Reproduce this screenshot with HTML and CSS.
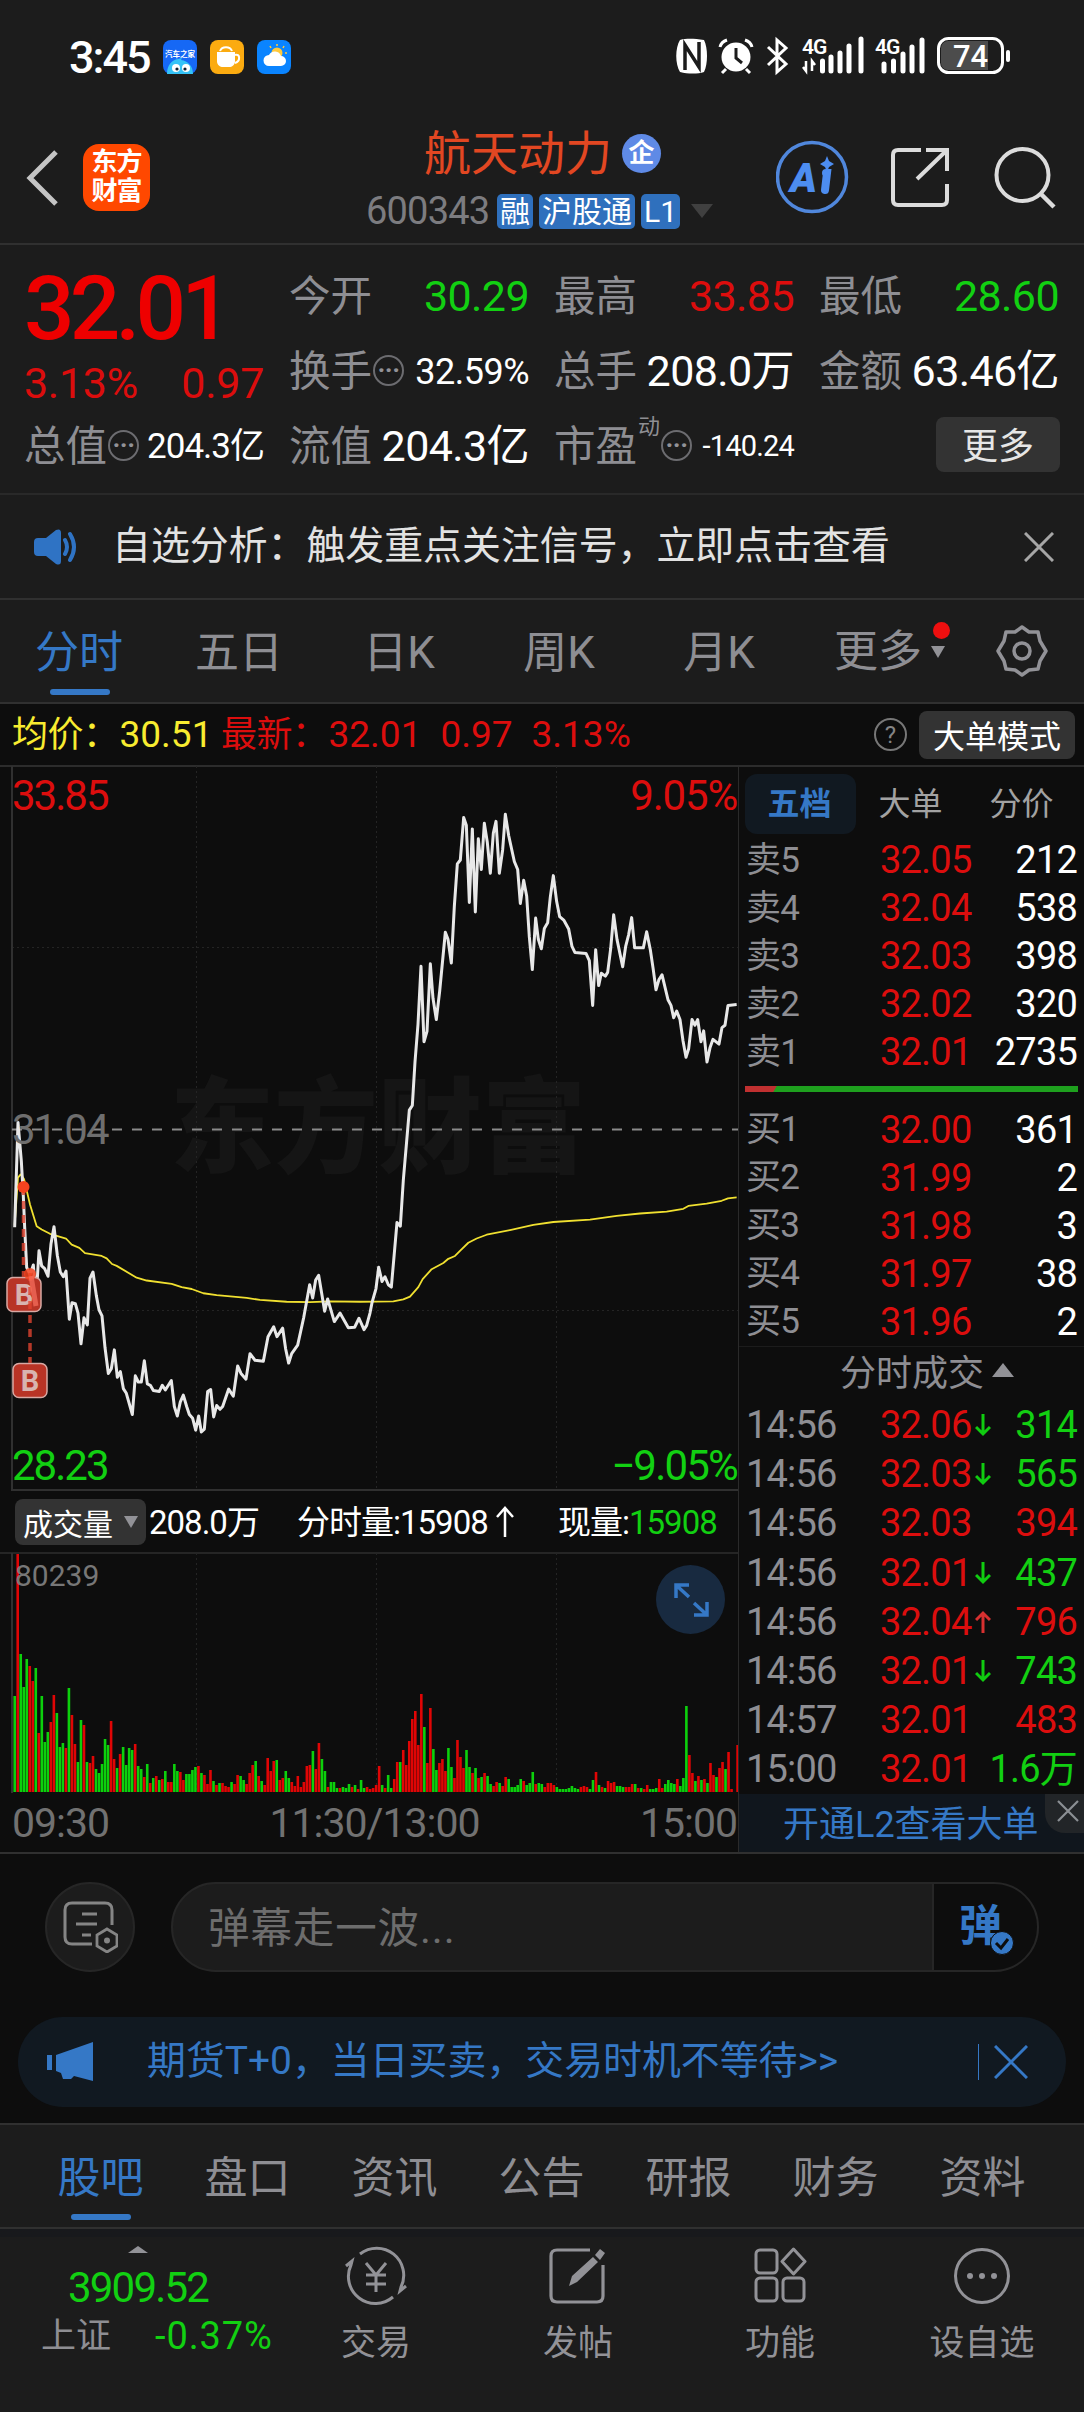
FILE: index.html
```html
<!DOCTYPE html>
<html lang="zh-CN">
<head>
	<meta charset="UTF-8">
	<meta name="viewport" content="width=device-width">
	<title>航天动力 600343</title>
	<link rel="stylesheet" href="styles.css">
</head>

<body>
	<div class="statusbar">
		<span class="clock">3:45</span>
		<svg class="apps" width="128" height="34" viewBox="0 0 128 34">
			<rect width="34" height="34" rx="8" fill="#1668f5"/>
			<text x="17" y="17" text-anchor="middle" font-size="7.5" font-weight="700" fill="#fff">汽车之家</text>
			<path d="M4 34c0-9 5-14 11-15l4-1-1 2c7 1 12 6 12 14z" fill="#35c3f7"/>
			<circle cx="13" cy="28" r="4" fill="#fff"/><circle cx="23" cy="28" r="4" fill="#fff"/>
			<circle cx="14" cy="29" r="1.6" fill="#123"/><circle cx="22" cy="29" r="1.6" fill="#123"/>
			<rect x="47" width="34" height="34" rx="8" fill="#fbab10"/>
			<path d="M54 12h18v9c0 4-3 6-6 6h-6c-3 0-6-2-6-6z" fill="#fff"/>
			<path d="M72 15c5-2 6 6 0 8M57 11c2-5 10-5 12 0" fill="none" stroke="#fff" stroke-width="2"/>
			<rect x="94" width="34" height="34" rx="8" fill="#0a84ff"/>
			<circle cx="114" cy="13" r="5.5" fill="#ffc93c"/>
			<path d="M114 4v2M121 6l-1 2M124 13h-2M107 6l1 2" stroke="#ffc93c" stroke-width="1.5"/>
			<path d="M106 26a5.500 5.500 0 0 1 0-11 6.500 6.500 0 0 1 12 1 5 5 0 0 1 0 10z" fill="#fff"/>
		</svg>
		<svg class="sysicons" width="336" height="40" viewBox="0 0 336 40">
			<path d="M4 4c8-2 15-1 24 0 4 8 4 24 0 32-6 2-16 2-24 0-5-8-5-24 0-32z" fill="#fff"/>
			<path d="M9 34V9l14 22V6" fill="none" stroke="#1c1c1c" stroke-width="3.500"/>
			<circle cx="60" cy="21" r="14.500" fill="#fff"/>
			<path d="M60 12v10l6 5" fill="none" stroke="#1c1c1c" stroke-width="3"/>
			<path d="M44 11c1-4 4-6 7-7M76 11c-1-4-4-6-7-7M50 33l-4 4M70 33l4 4" fill="none" stroke="#fff" stroke-width="3"/>
			<path d="M92 11l18 17-9 8V4l9 8-18 17" fill="none" stroke="#fff" stroke-width="3"/>
			<text class="net" x="126" y="18">4G</text>
			<path d="M130 25v10l-3-4M136 35V25l3 4" fill="none" stroke="#fff" stroke-width="2.500"/>
			<path d="M145.500 36V26M154 36V22M163 36V18M172 36V11M184 36V4" stroke="#fff" stroke-width="5" stroke-linecap="round" transform="translate(1 -1)"/>
			<text class="net" x="199" y="18">4G</text>
			<path d="M208 35V28M217.500 35V25M227 35V18M236 35V11M246 35V4" stroke="#fff" stroke-width="5" stroke-linecap="round"/>
			<rect x="262.500" y="2.500" width="64" height="34" rx="10" fill="#1c1c1c" stroke="#fff" stroke-width="3"/>
			<path d="M272 5h40v29h-40a7 7 0 0 1-7-7V12a7 7 0 0 1 7-7z" fill="#4c4c4c"/>
			<text x="294.500" y="30.500" text-anchor="middle" font-size="31" font-weight="500" fill="#fff">74</text>
			<path d="M332 16v8" stroke="#fff" stroke-width="4" stroke-linecap="round"/>
		</svg>
	</div>

	<header class="header">
		<svg class="back" width="34" height="56" viewBox="0 0 34 56"><path d="M30 2L4 28l26 26" fill="none" stroke="#c4c4c4" stroke-width="5"/></svg>
		<div class="logo">东方<br>财富</div>
		<div class="title">
			<div class="name">航天动力<span class="qi">企</span></div>
			<div class="code"><span class="num">600343</span><i class="tag">融</i><i class="tag">沪股通</i><i class="tag">L1</i><b class="down"></b></div>
		</div>
		<svg class="headicons" width="288" height="76" viewBox="0 0 288 76">
			<circle cx="36" cy="38" r="34.500" fill="none" stroke="#5087dc" stroke-width="3.500"/>
			<text x="14" y="53" font-size="41" font-weight="900" font-style="italic" fill="#4d8df0">A</text>
			<path d="M50 34h1l-2 17M50 34" fill="none" stroke="#4d8df0" stroke-width="8" stroke-linecap="round"/>
			<path d="M51 17l2 5 5 3-5 3-2 5-2-5-5-3 5-3z" fill="#4d8df0"/>
			<path d="M145 11h-23q-5 0-5 5v45q0 5 5 5h44q5 0 5-5V45M150 11h21v21M170 12l-29 28" fill="none" stroke="#dcdcdc" stroke-width="4"/>
			<circle cx="246.500" cy="36" r="26" fill="none" stroke="#dcdcdc" stroke-width="4"/>
			<path d="M264 54l14 14" stroke="#dcdcdc" stroke-width="4.500"/>
		</svg>
	</header>

	<section class="quote">
		<div class="last">
			<div class="price">32.01</div>
			<div class="change num"><span>3.13%</span><span>0.97</span></div>
		</div>
		<div class="cell"><label>今开</label><span class="num green">30.29</span></div>
		<div class="cell"><label>最高</label><span class="num red">33.85</span></div>
		<div class="cell"><label>最低</label><span class="num green">28.60</span></div>
		<div class="cell"><label>换手</label><b class="tip">···</b><span class="num mid">32.59%</span></div>
		<div class="cell"><label>总手</label><span class="num">208.0万</span></div>
		<div class="cell"><label>金额</label><span class="num">63.46亿</span></div>
		<div class="cell"><label>总值</label><b class="tip">···</b><span class="num mid total-value">204.3亿</span></div>
		<div class="cell"><label>流值</label><span class="num">204.3亿</span></div>
		<div class="cell"><label>市盈</label><sup>动</sup><b class="tip">···</b><span class="num small">-140.24</span></div>
		<div class="cell"><button class="more">更多</button></div>
	</section>

	<section class="notice">
		<svg width="46" height="36" viewBox="0 0 46 36"><path d="M0 13q0-4 4-4h8L22 1q5-2 5 3v28q0 5-5 3L12 27H4q-4 0-4-4z" fill="#2f73c4"/><path d="M31 11q4 7 0 14M36 5q8 13 0 26" fill="none" stroke="#2f73c4" stroke-width="4" stroke-linecap="round"/></svg>
		<p>自选分析：触发重点关注信号，立即点击查看</p>
		<svg width="30" height="30" viewBox="0 0 30 30"><path d="M1 1l28 28M29 1L1 29" stroke="#a6a6a6" stroke-width="3"/></svg>
	</section>

	<nav class="ktabs">
		<a class="active">分时</a><a>五日</a><a>日K</a><a>周K</a><a>月K</a>
		<a class="moretab">更多<b class="down"></b><i class="dot"></i></a>
		<svg width="52" height="52" viewBox="0 0 52 52"><path d="M26 2l7 5 9 0 2 9 6 10-6 10-2 8-9 1-7 5-7-5-9-1-2-8-6-10 6-10 2-9 9 0z" fill="none" stroke="#929297" stroke-width="3.500" stroke-linejoin="round"/><circle cx="26" cy="26" r="8" fill="none" stroke="#929297" stroke-width="3.500"/></svg>
	</nav>

	<section class="avgbar">
		<span class="yellow">均价：<span class="v1">30.51</span></span>
		<span class="red new">最新：<span class="v2">32.01</span><span class="v3">0.97</span><span class="v4">3.13%</span></span>
		<b class="help">?</b>
		<button class="bigmode">大单模式</button>
	</section>

	<main class="board">
		<div class="charts">
			<div class="minute">
				<span class="watermark">东方财富</span>
				<svg class="plot" width="738" height="725" viewBox="0 0 738 725">
					<path d="M196.500 0v724M376.500 0v724M556.500 0v724M12 181.500h726M12 544.500h726" stroke="#242424" stroke-width="1" stroke-dasharray="2 3"/>
					<path d="M12 0v725M12 724h726" fill="none" stroke="#303030" stroke-width="2"/>
					<path d="M12 363.500h726" stroke="#8a8a8a" stroke-width="1.800" stroke-dasharray="10 10"/>
					<g fill="none" stroke-linejoin="round" transform="scale(.33333 .4719) translate(0 -12.700)">
						<polyline vector-effect="non-scaling-stroke" stroke="#f0e030" stroke-width="1.800" points="44,985 54,885 62,878 72,888 90,942 110,988 125,995 150,1004 198,1014 215,1027 238,1034 255,1045 305,1051 320,1056 336,1068 350,1072 410,1097 440,1103 515,1110 545,1117 575,1121 610,1130 650,1134 740,1140 780,1144 860,1148 930,1149 990,1147 1080,1148 1180,1147 1210,1143 1230,1137 1255,1117 1268,1100 1295,1079 1330,1066 1345,1057 1365,1051 1380,1040 1405,1023 1430,1014 1460,1006 1530,996 1600,985 1660,979 1770,974 1850,966 1920,961 2000,957 2050,951 2065,945 2120,940 2165,934 2184,929 2210,927"/>
						<polyline vector-effect="non-scaling-stroke" stroke="#e8e8e8" stroke-width="3" points="44,990 54,768 64,850 70,925 74,990 80,1075 90,1090 100,1070 108,1145 117,1040 125,1072 134,1078 144,1094 153,1025 162,989 172,1050 181,1085 190,1095 198,1083 208,1185 216,1150 226,1152 234,1172 243,1237 252,1182 262,1197 270,1098 279,1085 289,1135 297,1165 306,1178 315,1245 325,1300 334,1290 343,1250 352,1308 361,1296 370,1332 379,1342 397,1387 406,1305 415,1318 424,1318 433,1273 442,1322 451,1325 460,1336 478,1338 487,1325 496,1335 514,1315 523,1370 532,1390 541,1360 550,1346 560,1370 568,1387 578,1395 587,1420 596,1390 604,1424 613,1418 623,1338 632,1334 641,1392 650,1368 660,1376 668,1370 686,1333 700,1348 713,1284 723,1300 738,1312 750,1258 765,1272 790,1274 804,1222 821,1201 831,1222 848,1204 857,1248 866,1278 875,1258 893,1240 911,1182 929,1112 938,1140 947,1102 956,1092 974,1168 983,1142 1003,1190 1020,1172 1045,1203 1064,1202 1077,1183 1092,1207 1100,1198 1110,1172 1116,1150 1128,1120 1136,1075 1146,1105 1155,1095 1165,1112 1174,1117 1183,1045 1191,980 1201,988 1210,890 1228,742 1237,732 1245,640 1254,560 1263,437 1272,597 1281,575 1291,432 1299,505 1309,550 1319,490 1336,365 1344,380 1354,430 1363,310 1372,220 1381,212 1391,122 1399,138 1408,302 1417,146 1426,322 1435,167 1444,232 1453,134 1462,175 1471,240 1480,155 1488,130 1498,240 1508,190 1516,115 1526,160 1543,215 1553,232 1561,304 1571,255 1580,288 1588,375 1597,444 1607,335 1615,380 1624,400 1633,357 1643,345 1651,290 1660,245 1670,300 1679,332 1692,340 1706,358 1716,395 1725,408 1758,410 1768,425 1778,520 1787,402 1796,478 1804,452 1816,458 1823,450 1832,400 1841,328 1851,380 1868,438 1877,395 1886,370 1895,334 1904,398 1930,398 1940,364 1951,402 1959,440 1968,487 1977,465 1986,455 2004,508 2013,520 2021,546 2030,532 2040,550 2049,595 2058,630 2066,612 2076,550 2085,562 2093,550 2103,597 2111,574 2121,640 2130,610 2139,592 2157,602 2166,567 2175,562 2184,520 2210,518"/>
					</g>
					<g font-size="29" font-weight="700" text-anchor="middle">
						<rect x="7" y="511.500" width="34" height="34" rx="6" fill="#b83426" stroke="#d8a9a4" stroke-width="1.500"/>
						<text x="24" y="539" fill="#d8b4b0">B</text>
						<rect x="13" y="597.500" width="34" height="34" rx="6" fill="#b83426" stroke="#d8a9a4" stroke-width="1.500"/>
						<text x="30" y="625" fill="#d8b4b0">B</text>
					</g>
					<path d="M23.500 421v90M30 507v90" stroke="#e0432f" stroke-opacity=".8" stroke-width="3.500" stroke-dasharray="8 6"/>
					<circle cx="23.500" cy="421" r="6" fill="#f4431f"/><circle cx="30" cy="508" r="6" fill="#f4431f" fill-opacity=".85"/>
					<path d="M31 510l5 30" stroke="#f87060" stroke-opacity=".7" stroke-width="5"/>
				</svg>
				<span class="axis tl red">33.85</span>
				<span class="axis tr red">9.05%</span>
				<span class="axis ml">31.04</span>
				<span class="axis bl green">28.23</span>
				<span class="axis br green">−9.05%</span>
			</div>
			<div class="volhead">
				<button>成交量<b class="down"></b></button>
				<span class="total">208.0万</span>
				<span class="minvol">分时量:15908<svg width="18" height="32" viewBox="0 0 18 32"><path d="M9 31V2M1 11l8-9 8 9" fill="none" stroke="#fff" stroke-width="2.500"/></svg></span>
				<span class="now">现量:<em class="green">15908</em></span>
			</div>
			<div class="volume">
				<svg id="bars" class="plot" width="738" height="240" viewBox="0 0 738 240">
					<path d="M196.500 0v239M376.500 0v239M556.500 0v239" stroke="#242424" stroke-width="1" stroke-dasharray="2 3"/>
					<path d="M12 0v240" stroke="#303030" stroke-width="2"/>
				</svg>
				<span class="volmax">80239</span>
				<svg class="expand" width="69" height="69" viewBox="0 0 69 69"><circle cx="34.500" cy="34.500" r="34.500" fill="#182a40"/><path d="M20 33V20h13M20 20l13 12M51 37v13H38M51 50L38 38" fill="none" stroke="#3578c6" stroke-width="3.500"/></svg>
			</div>
			<div class="times"><span>09:30</span><span>11:30/13:00</span><span>15:00</span></div>
		</div>

		<aside class="depth">
			<div class="dtabs"><a class="active">五档</a><a>大单</a><a>分价</a></div>
			<div class="rows">
				<div class="row"><label>卖5</label><span class="red">32.05</span><span>212</span></div>
				<div class="row"><label>卖4</label><span class="red">32.04</span><span>538</span></div>
				<div class="row"><label>卖3</label><span class="red">32.03</span><span>398</span></div>
				<div class="row"><label>卖2</label><span class="red">32.02</span><span>320</span></div>
				<div class="row"><label>卖1</label><span class="red">32.01</span><span>2735</span></div>
			</div>
			<div class="ratio"></div>
			<div class="rows">
				<div class="row"><label>买1</label><span class="red">32.00</span><span>361</span></div>
				<div class="row"><label>买2</label><span class="red">31.99</span><span>2</span></div>
				<div class="row"><label>买3</label><span class="red">31.98</span><span>3</span></div>
				<div class="row"><label>买4</label><span class="red">31.97</span><span>38</span></div>
				<div class="row"><label>买5</label><span class="red">31.96</span><span>2</span></div>
			</div>
			<div class="dealhead">分时成交<b class="up"></b></div>
			<div class="rows deals" id="deals"></div>
			<div class="l2">开通L2查看大单<span class="l2close"><svg width="22" height="22" viewBox="0 0 22 22"><path d="M1 1l20 20M21 1L1 21" stroke="#8b8f94" stroke-width="2.200"/></svg></span></div>
		</aside>
	</main>

	<section class="danmu">
		<div class="set"><svg width="56" height="52" viewBox="0 0 56 52"><path d="M30 43H10q-7 0-7-7V9q0-7 7-7h33q7 0 7 7v15M20 13h15M14 23h21M20 34h9" fill="none" stroke="#858585" stroke-width="3"/><path d="M45 28l10 6v11l-10 6-10-6V34z" fill="none" stroke="#858585" stroke-width="2.800"/><circle cx="45" cy="39.500" r="3" fill="#858585"/></svg></div>
		<div class="field"><span>弹幕走一波...</span><div class="send">弹<svg width="24" height="24" viewBox="0 0 24 24"><circle cx="12" cy="12" r="11.500" fill="#3578c6" stroke="#0d0d0d"/><path d="M6 12l5 5 7-9" fill="none" stroke="#0d0d0d" stroke-width="3"/></svg></div></div>
	</section>

	<section class="promo-wrap">
		<div class="promo">
			<svg width="46" height="40" viewBox="0 0 46 40"><path d="M0 13h5v15H0zM9 13L46 0v39L27 34l-3 3h-8l-2-6-5-2z" fill="#3578c6"/></svg>
			<p>期货T+0，当日买卖，交易时机不等待&gt;&gt;</p>
			<i></i>
			<svg width="34" height="34" viewBox="0 0 34 34"><path d="M1 1l32 32M33 1L1 33" stroke="#3578c6" stroke-width="3"/></svg>
		</div>
	</section>

	<nav class="infotabs">
		<a class="active">股吧</a><a>盘口</a><a>资讯</a><a>公告</a><a>研报</a><a>财务</a><a>资料</a>
	</nav>

	<footer class="toolbar">
		<div class="index">
			<b class="up"></b>
			<div class="point">3909.52</div>
			<div class="pct"><span>上证</span><em>-0.37%</em></div>
		</div>
		<div class="tool">
			<svg width="66" height="60" viewBox="0 0 66 60"><path d="M17 8A27 27 0 0 1 58 41l-1 4 6-5M50 51A27 27 0 0 1 8 19l1-4-6 5" fill="none" stroke="#929297" stroke-width="3"/><path d="M23 17l10 12 10-12M33 29v17M23 29h20M23 38h20" fill="none" stroke="#929297" stroke-width="3"/></svg>
			<span>交易</span>
		</div>
		<div class="tool">
			<svg width="58" height="60" viewBox="0 0 58 60"><path d="M41 4H8q-6 0-6 6v40q0 6 6 6h40q6 0 6-6V19" fill="none" stroke="#929297" stroke-width="3.200"/><path d="M20 40l3-10L44 11l5 5-21 20zM46 9l5-6 5 4-5 7z" fill="#929297"/></svg>
			<span>发帖</span>
		</div>
		<div class="tool">
			<svg width="54" height="60" viewBox="0 0 54 60"><g fill="none" stroke="#929297" stroke-width="3"><rect x="3" y="4" width="21" height="23" rx="4"/><rect x="3" y="32" width="21" height="23" rx="4"/><rect x="30" y="32" width="21" height="23" rx="4"/><path d="M40.500 3L52 15.500 40.500 28 29 15.500z" stroke-linejoin="round"/></g></svg>
			<span>功能</span>
		</div>
		<div class="tool">
			<svg width="58" height="60" viewBox="0 0 58 60"><circle cx="29" cy="30" r="26.500" fill="none" stroke="#929297" stroke-width="3"/><circle cx="17" cy="30" r="3" fill="#929297"/><circle cx="29" cy="30" r="3" fill="#929297"/><circle cx="41" cy="30" r="3" fill="#929297"/></svg>
			<span>设自选</span>
		</div>
	</footer>

	<script>
		// minute volume, one bar per minute: colour letter + bar height
		var volume = "G96 R238 G138 G105 G133 R126 R111 G124 R59 G96 G50 G60 R70 R97 G79 G45 G49 R44 G104 R77 R48 G30 G72 R67 G30 R29 R36 G23 G19 G28 G53 G47 R71 R33 G24 R38 G45 G27 G44 G42 R48 G26 G23 R15 G28 R9 G14 R16 G12 R13 G21 R10 R10 G28 G21 R20 R12 G18 G18 G22 G25 R26 G19 R17 R8 R22 G11 R7 G9 R9 R6 R5 G10 R8 R17 G16 G12 R8 R19 R27 G31 R16 G11 R7 R34 R21 R31 G32 R12 R14 G21 G14 R10 R6 R16 R5 R10 R26 R27 G41 R23 R49 G33 G21 R5 G10 G10 G4 R4 G5 G4 G8 R5 G7 R3 G12 G4 R5 R3 "
			+ "R4 R7 R26 G7 R4 G17 G4 R13 R30 G30 R42 R27 R51 R73 R81 R47 R98 G65 R29 R84 G43 G22 R29 R33 R21 G44 G25 R14 R52 R35 R24 G42 G25 R19 G24 R14 G15 R19 G16 G8 R6 R10 G9 R6 R15 G13 G5 G5 G7 G13 R11 G7 G9 G20 R8 G9 G8 R5 R9 R9 R7 G5 G3 G3 G3 G4 G6 G4 G3 R5 R6 R5 G3 G12 R20 G7 R5 G4 R11 R9 R10 G6 G6 G5 R5 R5 R8 G8 R4 G4 R3 R7 G3 G3 G4 R13 R4 G8 G12 G9 G8 R13 G6 G14 G86 R37 R19 G11 R16 G12 R13 G9 R29 R17 G15 R24 R30 G23 R40 R3 R0 R47";
		var svg = document.getElementById("bars");
		volume.split(" ").forEach(function (v, i) {
			var h = parseInt(v.slice(1));
			var bar = document.createElementNS("http://www.w3.org/2000/svg", "rect");
			bar.setAttribute("x", 13.4 + i * 3.012);
			bar.setAttribute("y", 239 - h);
			bar.setAttribute("width", 2.6);
			bar.setAttribute("height", h);
			bar.setAttribute("fill", v[0] == "R" ? "#e00505" : "#0cd00c");
			svg.appendChild(bar);
		});

		// time, price, arrow, volume, colour
		var deals = [
			["14:56", "32.06", "down", "314", "green"],
			["14:56", "32.03", "down", "565", "green"],
			["14:56", "32.03", "", "394", "red"],
			["14:56", "32.01", "down", "437", "green"],
			["14:56", "32.04", "up", "796", "red"],
			["14:56", "32.01", "down", "743", "green"],
			["14:57", "32.01", "", "483", "red"],
			["15:00", "32.01", "", "1.6万", "green"]
		];
		var arrows = {
			"": "",
			down: '<svg width="16" height="24" viewBox="0 0 16 24"><path d="M8 1v20M1 14l7 7 7-7" fill="none" stroke="#10cc10" stroke-width="3"/></svg>',
			up: '<svg width="16" height="24" viewBox="0 0 16 24"><path d="M8 23V3M1 10l7-7 7 7" fill="none" stroke="#d83030" stroke-width="3"/></svg>'
		};
		document.getElementById("deals").innerHTML = deals.map(function (d) {
			return '<div class="row"><label>' + d[0] + '</label><span class="red">' + d[1] + arrows[d[2]] + '</span><span class="' + d[4] + '">' + d[3] + '</span></div>';
		}).join("");
	</script>
</body>
</html>
```
FILE: styles.css
```css
* {
	box-sizing: border-box;
}

body {
	margin: 0;
	width: 1084px;
	height: 2412px;
	overflow: hidden;
	background-color: #1c1c1c;
	color: #fff;
	font-family: Roboto, "Noto Sans CJK SC", sans-serif;
	line-height: 1;
}

svg {
	display: block;
	flex: none;
}

p {
	margin: 0;
}

i, em {
	font-style: normal;
}

button {
	border: none;
	padding: 0;
	font-family: inherit;
	color: #fff;
	background-color: #333;
	border-radius: 8px;
}

.red {
	color: #dc0d0d;
}

.green {
	color: #12d012;
}

.yellow {
	color: #f8ec30;
}

.down, .up {
	width: 0;
	height: 0;
	border: 7px solid transparent;
	flex: none;
}

.down {
	border-top: 12px solid #929297;
	border-bottom: none;
}

.up {
	border-bottom: 14px solid #929297;
	border-top: none;
}

/* status bar */
.statusbar {
	display: flex;
	align-items: center;
	height: 100px;
	padding: 14px 72px 0 69px;
}

.clock {
	font-size: 45px;
	width: 94px;
	letter-spacing: -2px;
	font-weight: 500;
}

.sysicons {
	margin-left: auto;
	margin-top: -3px;
}

.net {
	font-size: 21px;
	font-weight: 600;
	fill: #fff;
	letter-spacing: -1px;
}

/* header */
.header {
	display: flex;
	height: 145px;
	padding-left: 26px;
	border-bottom: 2px solid #303030;
}

.back {
	margin-top: 50px;
}

.logo {
	width: 67px;
	height: 67px;
	margin: 44px 0 0 23px;
	padding-top: 4px;
	border-radius: 16px;
	background-color: #ff4800;
	font-size: 26px;
	line-height: 29px;
	font-weight: 700;
	text-align: center;
	letter-spacing: -1px;
}

.title {
	width: 384px;
	margin: 27px 0 0 216px;
}

.name {
	display: flex;
	align-items: center;
	height: 52px;
	padding-left: 58px;
	font-size: 47px;
	color: #e24722;
}

.qi {
	width: 39px;
	height: 39px;
	margin-left: 10px;
	border-radius: 50%;
	background-color: #5f8ae6;
	color: #fff;
	font-size: 26px;
	line-height: 38px;
	font-weight: 700;
	text-align: center;
}

.code {
	display: flex;
	align-items: center;
	height: 36px;
	margin-top: 14px;
	color: #7c7c80;
	font-size: 38px;
}

.code .num {
	width: 131px;
	font-size: 38px;
	letter-spacing: -.8px;
}

.tag {
	height: 35px;
	margin-right: 6px;
	padding: 0 3px;
	border-radius: 5px;
	background-color: #2f70bd;
	color: #fff;
	font-size: 30px;
	line-height: 35px;
}

.code .down {
	margin-left: 5px;
	border-width: 14px 11px 0;
	border-top-color: #404040;
}

.headicons {
	margin: 39px 0 0 26px;
}

/* quote summary */
.quote {
	display: grid;
	grid-template-columns: repeat(4, 240px);
	grid-template-rows: repeat(3, 75px);
	column-gap: 25px;
	height: 250px;
	padding: 14px 24px 0;
	border-bottom: 2px solid #292929;
}

.last {
	grid-row: span 2;
}

.price {
	height: 88px;
	padding-top: 5px;
	color: #ee0000;
	font-size: 89px;
	font-weight: 500;
	letter-spacing: -4.8px;
}

.change {
	display: flex;
	justify-content: space-between;
	padding-top: 15px;
	color: #dc0d0d;
}

.cell {
	display: flex;
	align-items: center;
	white-space: nowrap;
}

.cell label {
	color: #8e8e93;
	font-size: 41.5px;
}

.num {
	font-size: 43px;
	letter-spacing: -.3px;
}

.cell .num {
	margin-left: auto;
	letter-spacing: -.6px;
}

.cell .mid {
	font-size: 36px;
	letter-spacing: -.5px;
}

.cell .total-value {
	font-size: 35px;
	letter-spacing: -1px;
}

.cell .small {
	font-size: 29px;
	letter-spacing: -.8px;
}

.tip {
	width: 31px;
	height: 31px;
	margin: -3px 0 0 1px;
	border: 2px solid #6c6c70;
	border-radius: 50%;
	color: #929297;
	font-size: 26px;
	line-height: 26px;
	text-align: center;
	letter-spacing: -.5px;
}

.cell sup {
	align-self: flex-start;
	color: #8e8e93;
	font-size: 22px;
	margin: 7px 0 0 1px;
}

.more {
	width: 124px;
	height: 55px;
	margin: -4px -1px 0 auto;
	padding-bottom: 7px;
	font-size: 36px;
	color: #e6e6e6;
}

/* notice */
.notice {
	display: flex;
	align-items: center;
	height: 105px;
	padding: 0 30px 0 34px;
	border-bottom: 2px solid #303030;
	color: #e2e2e2;
	font-size: 38.9px;
}

.notice p {
	flex: 1;
	margin: 0 0 0 32px;
}

/* chart period tabs */
.ktabs {
	display: flex;
	align-items: center;
	height: 104px;
	padding: 0 36px 0 0;
	border-bottom: 2px solid #303030;
	color: #8e8e93;
	font-size: 44px;
}

.ktabs a {
	width: 160px;
	height: 102px;
	line-height: 106px;
	text-align: center;
	text-indent: -2px;
}

.active {
	position: relative;
	color: #3578c6;
}

.ktabs .active:after, .infotabs .active:after {
	content: "";
	position: absolute;
	left: 50%;
	bottom: 7px;
	width: 60px;
	height: 6px;
	margin-left: -30px;
	border-radius: 3px;
	background-color: #3578c6;
}

.ktabs .moretab {
	position: relative;
	display: flex;
	align-items: center;
	width: 160px;
	margin-left: 36px;
	margin-right: auto;
	padding-top: 2px;
}

.moretab .down {
	margin-left: 9px;
}

.dot {
	position: absolute;
	left: 97px;
	top: 22px;
	width: 17px;
	height: 17px;
	border-radius: 50%;
	background-color: #ee0f0f;
}

/* average price row */
.avgbar {
	display: flex;
	align-items: center;
	height: 63px;
	padding: 0 9px 0 12px;
	background-color: #0d0d0d;
	border-bottom: 2px solid #2c2c2c;
	font-size: 36px;
}

.avgbar span {
	display: flex;
	align-items: center;
	letter-spacing: -.5px;
}

.yellow {
	width: 209px;
}

.avgbar .v1, .avgbar .v2, .avgbar .v3, .avgbar .v4 {
	padding-left: 1px;
	font-size: 37px;
	letter-spacing: 0;
}

.v2 {
	width: 112px;
}

.v3 {
	width: 91px;
}

.help {
	width: 33px;
	height: 33px;
	margin-left: auto;
	border: 2px solid #777;
	border-radius: 50%;
	color: #858585;
	font-size: 24px;
	font-weight: 400;
	line-height: 30px;
	text-align: center;
}

.bigmode {
	width: 156px;
	height: 48px;
	margin-left: 12px;
	font-size: 32px;
	padding-bottom: 3px;
}

/* main board */
.board {
	display: flex;
	height: 1087px;
	background-color: #0d0d0d;
	border-bottom: 2px solid #303030;
}

.charts {
	width: 739px;
	border-right: 1px solid #2a2a2a;
}

.minute {
	position: relative;
	height: 725px;
}

.watermark {
	position: absolute;
	left: 170px;
	top: 312px;
	color: #151515;
	font-size: 104px;
	font-weight: 900;
}

.plot {
	position: relative;
}

.minute .plot {
	margin-top: -1px;
}

.axis {
	position: absolute;
	font-size: 42px;
	letter-spacing: -2px;
}

.tl, .ml, .bl {
	left: 12px;
}

.tr, .br {
	right: 1px;
	letter-spacing: -1.2px;
}

.br {
	letter-spacing: -1.8px;
}

.tl, .tr {
	top: 9px;
}

.ml {
	top: 343px;
	color: #6e6e6e;
}

.bl, .br {
	top: 679px;
}

.volhead {
	display: flex;
	align-items: center;
	height: 63px;
	padding: 1px 0 0 15px;
	border-bottom: 2px solid #252525;
	font-size: 33px;
	letter-spacing: -1px;
}

.volhead button {
	display: flex;
	align-items: center;
	justify-content: space-between;
	width: 131px;
	height: 46px;
	padding: 0 8px 1px;
	font-size: 30px;
}

.total {
	width: 148px;
	margin-left: 3px;
}

.minvol {
	display: flex;
	align-items: center;
	width: 261px;
}

.minvol svg {
	margin-left: 8px;
}

.volume {
	position: relative;
	height: 240px;
	margin-top: -1px;
}

.volmax {
	position: absolute;
	left: 15px;
	top: 8px;
	color: #777;
	font-size: 30px;
}

.expand {
	position: absolute;
	left: 656px;
	top: 12px;
}

.times {
	display: flex;
	justify-content: space-between;
	align-items: center;
	height: 60px;
	padding: 0 1px 0 12px;
	color: #717171;
	font-size: 41px;
	letter-spacing: -1px;
}

/* order book */
.depth {
	flex: 1;
	display: flex;
	flex-direction: column;
}

.dtabs {
	display: flex;
	height: 60px;
	margin: 7px 6px 2px;
	color: #a2a2a2;
	font-size: 32px;
}

.dtabs a {
	width: 111px;
	line-height: 61px;
	text-align: center;
	text-indent: -2px;
}

.dtabs .active {
	border-radius: 12px;
	background-color: #111921;
	color: #3578c6;
	font-weight: 700;
}

.row {
	display: flex;
	align-items: center;
	height: 48px;
	padding: 0 7px;
	font-size: 38px;
	letter-spacing: -.8px;
}

.row label {
	width: 134px;
	color: #8e8e93;
	font-size: 35px;
}

.row span {
	display: flex;
	align-items: center;
}

.row span:last-child {
	margin-left: auto;
}

.row svg {
	margin-left: 4px;
}

.ratio {
	height: 6px;
	margin: 10px 6px 14px;
	background: linear-gradient(120deg, #c03030 27px, #1ea01e 28px);
}

.dealhead {
	display: flex;
	align-items: center;
	height: 58px;
	padding-left: 101px;
	border-top: 1px solid #1c1c1c;
	color: #8e8e93;
	font-size: 36px;
}

.dealhead .up {
	margin-left: 8px;
	border-width: 0 11px 14px;
	transform: translateY(-4px);
}

.deals {
	flex: 1;
}

.deals .row {
	height: 49.2px;
}

.deals label {
	font-size: 38px;
}

.l2 {
	position: relative;
	height: 58px;
	padding-left: 44px;
	background-color: #10161d;
	color: #3578c6;
	font-size: 36px;
	line-height: 62px;
}

.l2close {
	position: absolute;
	right: 0;
	top: 0;
	width: 39px;
	height: 39px;
	padding: 6px 0 0 12px;
	border-bottom-left-radius: 20px;
	background-color: #222528;
}

/* comment box */
.danmu {
	display: flex;
	height: 163px;
	padding: 28px 45px 0;
	background-color: #0d0d0d;
}

.set {
	display: flex;
	align-items: center;
	justify-content: center;
	width: 90px;
	height: 90px;
	border: 2px solid #262626;
	border-radius: 50%;
	background-color: #1c1c1c;
}

.field {
	display: flex;
	justify-content: space-between;
	width: 868px;
	height: 90px;
	margin-left: 36px;
	padding-left: 35px;
	border: 2px solid #262626;
	border-radius: 45px;
	background-color: #1c1c1c;
	color: #6d6d6d;
	font-size: 41.5px;
	line-height: 89px;
	overflow: hidden;
}

.field > span {
	letter-spacing: .9px;
}

.send {
	position: relative;
	width: 105px;
	padding-left: 25px;
	border-left: 2px solid #262626;
	background-color: #0d0d0d;
	color: #3578c6;
	font-size: 43px;
	font-weight: 700;
	line-height: 84px;
}

.send svg {
	position: absolute;
	left: 56px;
	top: 47px;
}

/* promo */
.promo-wrap {
	height: 106px;
	padding: 0 18px;
	background-color: #0d0d0d;
}

.promo {
	display: flex;
	align-items: center;
	height: 90px;
	padding: 0 38px 0 29px;
	border-radius: 45px;
	background-color: #111921;
	color: #3578c6;
	font-size: 38.9px;
}

.promo p {
	flex: 1;
	margin: -1px 0 0 54px;
}

.promo i {
	width: 1px;
	height: 36px;
	margin-right: 15px;
	background-color: #3578c6;
}

/* info tabs */
.infotabs {
	display: flex;
	height: 106px;
	padding: 0 28px 0 27px;
	border-top: 2px solid #303030;
	border-bottom: 2px solid #303030;
	color: #8e8e93;
	font-size: 43px;
}

.infotabs a {
	flex: 1;
	line-height: 107px;
	text-align: center;
}

/* bottom toolbar */
.toolbar {
	display: flex;
	height: 183px;
	border-top: 8px solid #18191c;
	color: #929297;
	font-size: 35px;
}

.index {
	width: 275px;
	color: #12d012;
}

.index .up {
	display: block;
	margin: 9px 0 0 128px;
	border-width: 0 10px 7px;
}

.point {
	margin: 14px 0 0 68px;
	font-size: 42px;
	letter-spacing: -1.8px;
}

.pct {
	display: flex;
	align-items: center;
	margin-top: 8px;
	padding-left: 41px;
}

.pct span {
	width: 114px;
	color: #8e8e93;
}

.pct em {
	font-size: 38px;
	letter-spacing: .9px;
}

.tool {
	display: flex;
	flex-direction: column;
	align-items: center;
	width: 202px;
	padding-top: 9px;
}

.tool span {
	margin-top: 20px;
}
```
